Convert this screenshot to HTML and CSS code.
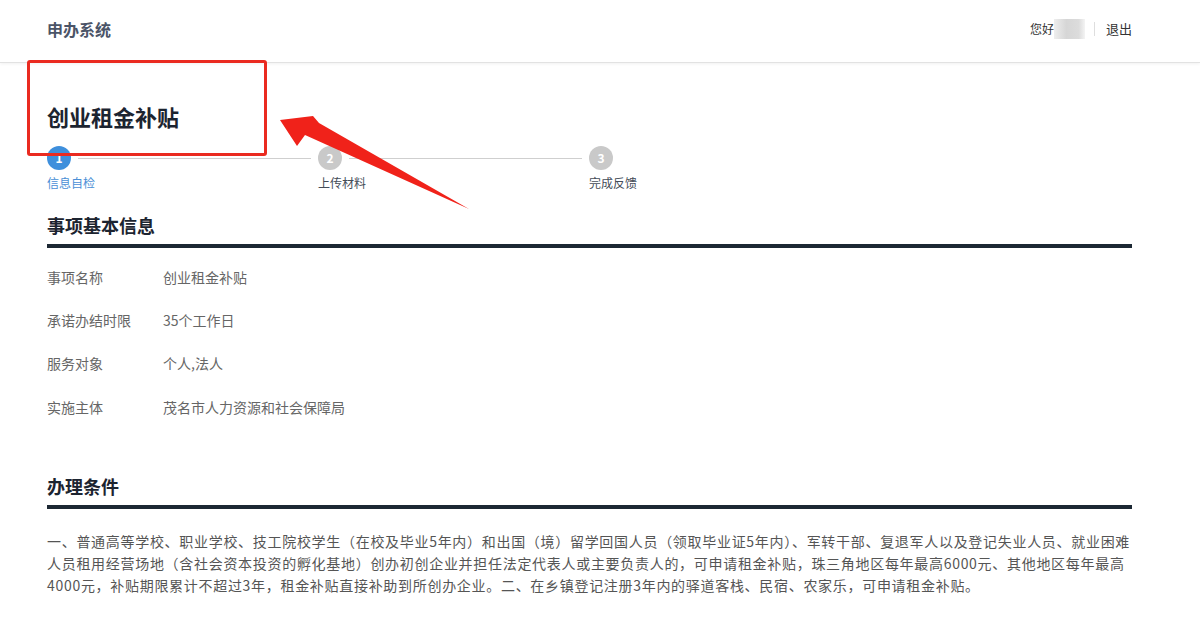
FILE: index.html
```html
<!DOCTYPE html>
<html lang="zh-CN">
<head>
    <meta charset="UTF-8">
    <meta name="viewport" content="width=device-width, initial-scale=1.0">
    <title>申办系统 - 创业租金补贴</title>
    <link rel="stylesheet" href="styles.css">
</head>
<body>
    <div class="header">
        <div class="brand">申办系统</div>
        <div class="user-bar">
            <span class="greeting">您好</span>
            <span class="user-mask"></span>
            <span class="divider"></span>
            <a class="logout" href="#">退出</a>
        </div>
    </div>

    <div class="main">
        <h1 class="page-title">创业租金补贴</h1>

        <div class="steps">
            <div class="step active">
                <div class="step-head">
                    <span class="step-dot">1</span>
                    <span class="step-line"></span>
                </div>
                <div class="step-label">信息自检</div>
            </div>
            <div class="step">
                <div class="step-head">
                    <span class="step-dot">2</span>
                    <span class="step-line"></span>
                </div>
                <div class="step-label">上传材料</div>
            </div>
            <div class="step last">
                <div class="step-head">
                    <span class="step-dot">3</span>
                </div>
                <div class="step-label">完成反馈</div>
            </div>
        </div>

        <h2 class="section-title">事项基本信息</h2>
        <div class="info-list">
            <div class="info-row">
                <span class="info-label">事项名称</span>
                <span class="info-value">创业租金补贴</span>
            </div>
            <div class="info-row">
                <span class="info-label">承诺办结时限</span>
                <span class="info-value">35个工作日</span>
            </div>
            <div class="info-row">
                <span class="info-label">服务对象</span>
                <span class="info-value">个人,法人</span>
            </div>
            <div class="info-row">
                <span class="info-label">实施主体</span>
                <span class="info-value">茂名市人力资源和社会保障局</span>
            </div>
        </div>

        <h2 class="section-title conditions-title">办理条件</h2>
        <p class="conditions">一、普通高等学校、职业学校、技工院校学生（在校及毕业5年内）和出国（境）留学回国人员（领取毕业证5年内）、军转干部、复退军人以及登记失业人员、就业困难人员租用经营场地（含社会资本投资的孵化基地）创办初创企业并担任法定代表人或主要负责人的，可申请租金补贴，珠三角地区每年最高6000元、其他地区每年最高4000元，补贴期限累计不超过3年，租金补贴直接补助到所创办企业。二、在乡镇登记注册3年内的驿道客栈、民宿、农家乐，可申请租金补贴。</p>
    </div>

    <!-- annotation drawn over the screenshot -->
    <div class="mark-box"></div>
    <svg class="mark-arrow" width="1200" height="627" viewBox="0 0 1200 627">
        <polygon points="280,120 313,116 319,123 469,209 305,135 297,146" fill="#f0221a"/>
    </svg>
</body>
</html>
```

FILE: styles.css
```css
body {
    margin: 0;
    font-family: "Noto Sans CJK SC", "Noto Sans", sans-serif;
    background-color: #fff;
    color: #333;
}

.header {
    display: flex;
    justify-content: space-between;
    align-items: center;
    height: 58px;
    padding: 0 68px 4px 47px;
    border-bottom: 1px solid #e2e2e2;
    box-shadow: 0 1px 3px rgba(0, 0, 0, 0.06);
}

.brand {
    font-size: 16px;
    font-weight: bold;
    color: #4b5467;
    line-height: 20px;
}

.user-bar {
    display: flex;
    align-items: center;
    font-size: 12px;
    line-height: 16px;
    color: #333;
}

.user-mask {
    width: 31px;
    height: 20px;
    background: linear-gradient(90deg, #eeeeee, #d6d6d6 40%, #dcdcdc 80%, #f4f4f4);
    margin-right: 9px;
}

.divider {
    width: 1px;
    height: 14px;
    background-color: #dedede;
    margin-right: 11px;
}

.logout {
    color: #333;
    font-size: 13px;
    text-decoration: none;
}

.main {
    padding: 0 68px 0 47px;
}

.page-title {
    margin: 38px 0 0;
    font-size: 22px;
    line-height: 30px;
    color: #1c2430;
}

.steps {
    display: flex;
    margin-top: 15px;
}

.step {
    width: 271px;
}

.step.last {
    width: auto;
}

.step-head {
    display: flex;
    align-items: center;
    height: 24px;
}

.step-dot {
    width: 24px;
    height: 24px;
    border-radius: 50%;
    background-color: #c9c9c9;
    color: #fff;
    font-size: 12px;
    font-weight: bold;
    line-height: 24px;
    text-align: center;
}

.step.active .step-dot {
    background-color: #3e8fdc;
}

.step-line {
    flex: 1;
    height: 1px;
    background-color: #cfcfcf;
    margin: 0 7px;
}

.step-label {
    margin-top: 5px;
    font-size: 12px;
    line-height: 16px;
    color: #444c58;
}

.step.active .step-label {
    color: #4a8fd6;
}

.section-title {
    margin: 22px 0 0;
    padding-bottom: 7px;
    font-size: 18px;
    line-height: 24px;
    color: #1c2430;
    border-bottom: 4px solid #1c2833;
}

.info-list {
    margin-top: 7px;
}

.info-row {
    display: flex;
    height: 43.4px;
    align-items: center;
    font-size: 14px;
    color: #666;
}

.info-label {
    width: 116px;
}

.info-value {
    color: #666;
}

.conditions-title {
    margin-top: 45px;
    padding-bottom: 7px;
}

.conditions {
    margin: 21px 0 0;
    font-size: 14px;
    line-height: 22px;
    letter-spacing: 0.7px;
    color: #555;
}

/* red annotation overlay */
.mark-box {
    position: absolute;
    left: 27px;
    top: 60px;
    width: 234px;
    height: 90px;
    border: 3px solid #ea2a20;
    border-radius: 3px;
}

.mark-arrow {
    position: absolute;
    left: 0;
    top: 0;
    pointer-events: none;
}
```
